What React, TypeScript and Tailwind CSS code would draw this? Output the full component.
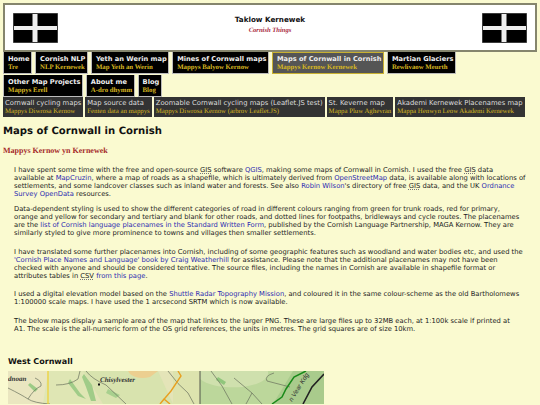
const sans = "font-['DejaVu_Sans','Liberation_Sans',sans-serif]";
const serif = "font-['Liberation_Serif',serif]";

const mainNav = [
  { title: 'Home', sub: 'Tre' },
  { title: 'Cornish NLP', sub: 'NLP Kernewek' },
  { title: 'Yeth an Werin map', sub: 'Map Yeth an Werin' },
  { title: 'Mines of Cornwall maps', sub: 'Mappys Balyow Kernow' },
  { title: 'Maps of Cornwall in Cornish', sub: 'Mappys Kernow Kernewek', active: true },
  { title: 'Martian Glaciers', sub: 'Rewlivaow Meurth' },
  { title: 'Other Map Projects', sub: 'Mappys Erell' },
  { title: 'About me', sub: 'A-dro dhymm' },
  { title: 'Blog', sub: 'Blog' },
];

const subNav = [
  { title: 'Cornwall cycling maps', sub: 'Mappys Diwrosa Kernow' },
  { title: 'Map source data', sub: 'Fenten data an mappys' },
  { title: 'Zoomable Cornwall cycling maps (Leaflet.JS test)', sub: 'Mappys Diwrosa Kernow (arbrov Leaflet.JS)' },
  { title: 'St. Keverne map', sub: 'Mappa Pluw Aghevran' },
  { title: 'Akademi Kernewek Placenames map', sub: 'Mappa Henwyn Leow Akademi Kernewek' },
];

function Flag() {
  return (
    <svg width={45} height={30} viewBox="0 0 45 30" className="shrink-0" aria-hidden>
      <rect width="45" height="30" fill="#000" stroke="#777" strokeWidth="1" />
      <rect x="19.5" y="1" width="5" height="28" fill="#eee" />
      <rect x="1" y="13" width="43" height="4" fill="#eee" />
    </svg>
  );
}

function Link({ children }: { children: React.ReactNode }) {
  return <a className="text-[#2a2ab0]">{children}</a>;
}

function Abbr({ children }: { children: React.ReactNode }) {
  return <abbr className="underline decoration-[#777] decoration-dotted underline-offset-1">{children}</abbr>;
}

function MapSample() {
  return (
    <svg width={316} height={33} viewBox="0 0 316 33" className="block" aria-hidden>
      <rect width="316" height="33" fill="#e4e4b8" />
      {/* landcover tints */}
      <path d="M0 0H60V33H0Z" fill="#eae6c0" />
      <path d="M40 0H75L85 33H35Z" fill="#dfe6b4" />
      <path d="M75 0H150L165 33H95Z" fill="#d8e3ae" />
      <path d="M120 0H150L142 6Q130 9 122 3Z" fill="#eccf90" />
      <path d="M165 0H192V33H165Z" fill="#dde3ae" />
      <path d="M192 0H316V33H192Z" fill="#bcd79b" />
      <path d="M192 0H260Q262 12 235 16Q205 18 192 8Z" fill="#cfe0ad" />
      <path d="M285 0H316V33H265Z" fill="#a9cb8c" />
      {/* woodland */}
      <path d="M22 12L30 18L27 21L20 14Z" fill="#9ccb86" />
      <path d="M62 8L72 22L78 28L70 25L60 12Z" fill="#a0cc88" />
      <path d="M76 3L84 14L88 30L83 30L78 16L74 6Z" fill="#a0cc88" />
      <path d="M100 18L112 24L108 27L98 22Z" fill="#a8d08e" />
      <path d="M210 6L218 11L216 14L208 9Z" fill="#90c67c" />
      {/* minor roads */}
      <g fill="none" stroke="#68705c" strokeWidth="0.7">
        <path d="M0 17Q14 24 20 28T42 33" />
        <path d="M27 7Q34 10 33 15Q26 18 20 28" />
        <path d="M48 14Q62 14 70 8L72 0" />
        <path d="M78 0Q84 8 98 14L118 33" />
        <path d="M160 0Q170 14 180 22L186 33" />
        <path d="M203 0L214 15L224 33" />
        <path d="M226 7L244 22L254 33" />
        <path d="M244 22L238 33" />
        <path d="M266 2Q256 5 259 10L282 16" />
      </g>
      {/* A-roads */}
      <path d="M40 0V33" stroke="#f0d030" strokeWidth="1.2" fill="none" />
      <path d="M170 0L173 5L163 20L152 33M152 33L156 28L162 33" stroke="#e8a020" strokeWidth="1.4" fill="none" />
      <path d="M192 0V33" stroke="#333" strokeWidth="0.8" fill="none" />
      <path d="M298 0L286 6L278 18L274 26L264 33" stroke="#1a8a1a" strokeWidth="1.5" fill="none" />
      <path d="M316 3L304 16L295 33" stroke="#222" strokeWidth="1.6" fill="none" />
      {/* placenames */}
      <text x="0" y="10" fontFamily="'Liberation Serif', serif" fontStyle="italic" fontWeight="700" fontSize="7" fill="#333">dnoan</text>
      <text x="92" y="11" fontFamily="'Liberation Serif', serif" fontStyle="italic" fontWeight="700" fontSize="7" fill="#333">Chisylvester</text>
      <rect x="90" y="12.5" width="2" height="2" fill="#111" />
      <text x="0" y="0" transform="translate(284 31) rotate(-58)" fontFamily="'Liberation Sans', sans-serif" fontStyle="italic" fontSize="6.5" fill="#333">n Vear Kdg</text>
    </svg>
  );
}

export default function App() {
  return (
    <div className={`h-[405px] w-[540px] overflow-hidden bg-[#fafad0] pt-[3px] text-[#222] [text-rendering:geometricPrecision] ${sans}`}>
      <header className="mx-[3px] flex h-[49px] items-center justify-between border-2 border-[#85856d] bg-white pr-2 pl-[8px]">
        <Flag />
        <div className="pb-[6px] text-center">
          <h1 className="text-[7.2px] leading-[10px] font-bold text-[#111]">Taklow Kernewek</h1>
          <p className={`mt-[1px] text-[6.6px] leading-[9px] font-bold text-[#a8283c] italic ${serif}`}>Cornish Things</p>
        </div>
        <Flag />
      </header>

      <nav className="mx-[3px] flex flex-wrap gap-x-[3px] gap-y-px">
        {mainNav.map((item) => (
          <a
            key={item.title}
            className={`flex h-[22px] flex-col justify-center border pr-[1.5px] pl-[4px] ${
              item.active ? 'border-[#c8b030] bg-[#555]' : 'border-[#bbb] border-t-0 bg-black'
            }`}
          >
            <b className="text-[6.65px] leading-[10px] whitespace-nowrap text-[#eee]">{item.title}</b>
            <span className={`text-[6.8px] leading-[8px] font-bold whitespace-nowrap text-[#d8b820] ${serif}`}>{item.sub}</span>
          </a>
        ))}
      </nav>

      <nav className="mx-[3px] flex gap-[2px]">
        {subNav.map((item) => (
          <a key={item.title} className="flex h-[20px] flex-col justify-center bg-[#333] px-[2px]">
            <span className="text-[6.8px] leading-[10px] whitespace-nowrap text-[#ddd]">{item.title}</span>
            <span className={`text-[6.8px] leading-[8px] whitespace-nowrap text-[#d8b820] ${serif}`}>{item.sub}</span>
          </a>
        ))}
      </nav>

      <main>
        <h2 className="mt-[8px] ml-[3px] text-[10.1px] leading-[14px] font-bold text-[#111]">Maps of Cornwall in Cornish</h2>
        <h3 className={`mt-[6px] ml-[3px] text-[8px] leading-[12px] font-bold text-[#a52a2a] ${serif}`}>Mappys Kernow yn Kernewek</h3>

        <div className="mt-[9px] ml-[14px] text-[6.78px] leading-[8px] whitespace-nowrap">
          <p>
            I have spent some time with the free and open-source <Abbr>GIS</Abbr> software <Link>QGIS</Link>, making some maps of Cornwall in Cornish. I used the free <Abbr>GIS</Abbr> data
            <br />
            available at <Link>MapCruzin</Link>, where a map of roads as a shapefile, which is ultimately derived from <Link>OpenStreetMap</Link> data, is available along with locations of
            <br />
            settlements, and some landcover classes such as inland water and forests. See also <Link>Robin Wilson</Link>'s directory of free <Abbr>GIS</Abbr> data, and the UK <Link>Ordnance</Link>
            <br />
            <Link>Survey OpenData</Link> resources.
          </p>
          <p className="mt-[7px]">
            Data-dependent styling is used to show the different categories of road in different colours ranging from green for trunk roads, red for primary,
            <br />
            orange and yellow for secondary and tertiary and blank for other roads, and dotted lines for footpaths, bridleways and cycle routes. The placenames
            <br />
            are the <Link>list of Cornish language placenames in the Standard Written Form</Link>, published by the Cornish Language Partnership, MAGA Kernow. They are
            <br />
            similarly styled to give more prominence to towns and villages then smaller settlements.
          </p>
          <p className="mt-[10.5px]">
            I have translated some further placenames into Cornish, including of some geographic features such as woodland and water bodies etc, and used the
            <br />
            <Link>'Cornish Place Names and Language' book by Craig Weatherhill</Link> for assistance. Please note that the additional placenames may not have been
            <br />
            checked with anyone and should be considered tentative. The source files, including the names in Cornish are available in shapefile format or
            <br />
            attributes tables in <Abbr>CSV</Abbr> <Link>from this page</Link>.
          </p>
          <p className="mt-[10.5px]">
            I used a digital elevation model based on the <Link>Shuttle Radar Topography Mission</Link>, and coloured it in the same colour-scheme as the old Bartholomews
            <br />
            1:100000 scale maps. I have used the 1 arcsecond SRTM which is now available.
          </p>
          <p className="mt-[10.5px]">
            The below maps display a sample area of the map that links to the larger PNG. These are large files up to 32MB each, at 1:100k scale if printed at
            <br />
            A1. The scale is the all-numeric form of the OS grid references, the units in metres. The grid squares are of size 10km.
          </p>
        </div>

        <h2 className="mt-[23px] ml-[8px] text-[8px] leading-[12px] font-bold text-[#111]">West Cornwall</h2>
        <div className="mt-[3px] ml-[8px]">
          <MapSample />
        </div>
      </main>
    </div>
  );
}
